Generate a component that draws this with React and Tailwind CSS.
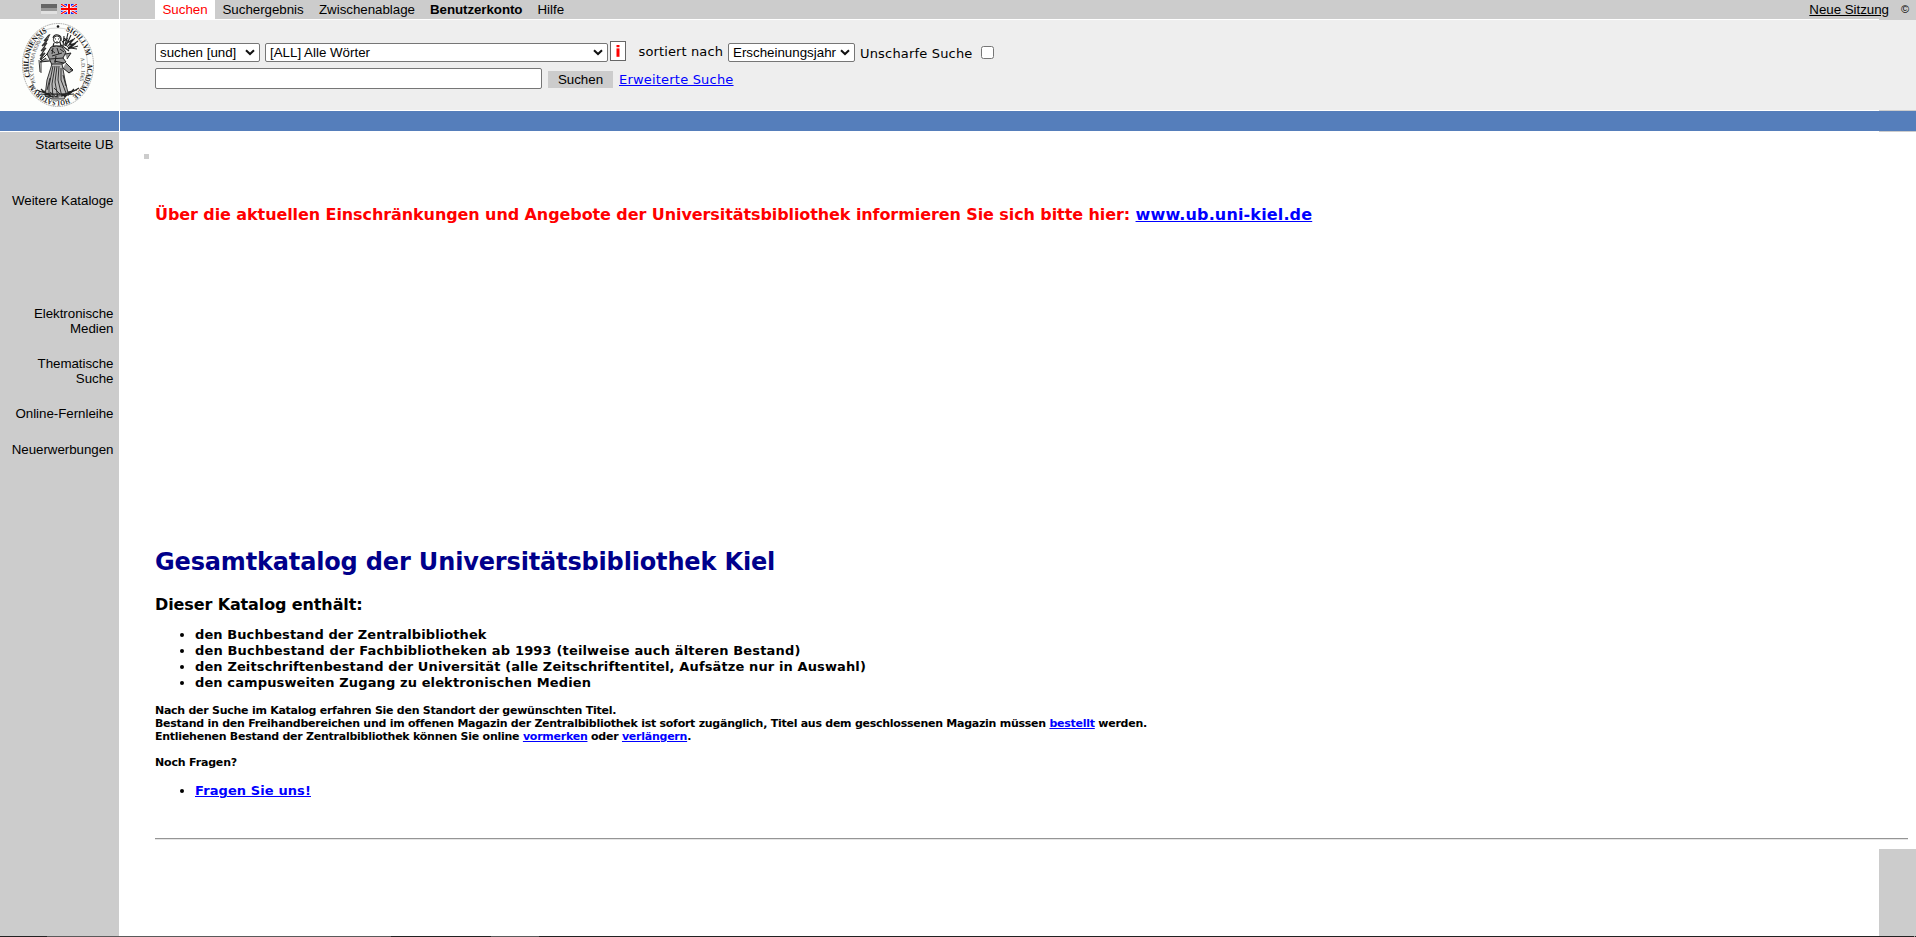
import React from "react";

const link = "text-[#0000ff] underline";

function GermanFlag() {
  return (
    <svg width="16" height="10" viewBox="0 0 16 10" shapeRendering="crispEdges">
      <rect width="16" height="4" fill="#666" />
      <rect y="4" width="16" height="3" fill="#999" />
      <rect y="7" width="16" height="3" fill="#e0e0e0" />
    </svg>
  );
}

function BritishFlag() {
  return (
    <svg width="16" height="10" viewBox="0 0 16 10">
      <rect width="16" height="10" fill="#1a2cf0" />
      <path d="M0 0L16 10M16 0L0 10" stroke="#fff" strokeWidth="2.6" />
      <path d="M0 0L16 10M16 0L0 10" stroke="#f00" strokeWidth="1.2" />
      <path d="M8 0V10M0 5H16" stroke="#fff" strokeWidth="3.6" />
      <path d="M8 0V10M0 5H16" stroke="#f00" strokeWidth="2" />
    </svg>
  );
}

const ringWords = [
  { word: "SIGILLVM", start: 8, length: 34 },
  { word: "ACADEMIAE", start: 50, length: 37 },
  { word: "HOLSATORVM", start: 91, length: 43 },
  { word: "CHILONIENSIS", start: 141, length: 52 },
];

function Seal() {
  return (
    <svg width="119" height="90" viewBox="0 0 119 90" fill="none" stroke="#222" strokeWidth="0.7">
      <ellipse cx="58" cy="45" rx="35.5" ry="41.5" strokeDasharray="1.6 0.7" stroke="#888" />
      <path
        d="M43 10.5Q51 7.5 58 8Q69 8 77 15M32 21Q28 32 28 45Q28 60 37 71M83 25Q88 36 88 48Q87 61 80 69"
        stroke="#bbb"
        strokeWidth="0.6"
      />
      <circle cx="58" cy="6.5" r="1.3" fill="#111" stroke="none" />
      <path id="ring" d="M58 9.5A29.5 35.5 0 0 1 58 80.5A29.5 35.5 0 0 1 58 9.5" stroke="none" />
      {ringWords.map(({ word, start, length }) => (
        <text
          key={word}
          fill="#111"
          stroke="none"
          fontSize="7.6"
          fontWeight="bold"
          fontFamily="Liberation Serif, serif"
        >
          <textPath href="#ring" startOffset={start} textLength={length} lengthAdjust="spacingAndGlyphs">
            {word}
          </textPath>
        </text>
      ))}
      <path id="motto" d="M35.5 63Q28 38 45 16" stroke="none" />
      <text fill="#333" stroke="none" fontSize="5.4" fontFamily="Liberation Serif, serif">
        <textPath href="#motto" textLength="49">PAX OPTIMA RERVM</textPath>
      </text>
      <path id="year" d="M80.5 38Q83 50 79 62" stroke="none" />
      <text fill="#333" stroke="none" fontSize="5.4" fontFamily="Liberation Serif, serif">
        <textPath href="#year" textLength="23">A.D. 1665</textPath>
      </text>
      {/* palm branch */}
      <path d="M41 53Q39.5 33 50 14M39 40L40 52" stroke="#222" strokeWidth="0.9" />
      <path d="M49 15L44 21L48 19L42 26L47 23L41 31L46 28L40 36L45 33L40 39" stroke="#333" strokeWidth="1.2" />
      {/* head and laurel */}
      <circle cx="57" cy="19.5" r="3.6" strokeWidth="1" />
      <path d="M53 18Q54 14 58 15Q62 16 61 21M55 19H56M58 19H59M56 22H58M54 23L53 26H61L60 22" strokeWidth="1.1" />
      {/* sheaf */}
      <path
        d="M63 27L64 16M65 26L68 13M66 26L71 15M67 27L75 18M68 28L78 21M68 29L78 26M62 22L67 19L65 24L72 20L69 25L76 23L70 28L77 29M61 25L69 31M64 18L73 26"
        strokeWidth="1.1"
      />
      {/* torso and arms */}
      <path
        d="M51 27Q56 25 62 27L66 32L63 38L66 42L60 45H52L49 38L47 34ZM48 33L44 37L40 40M46 38L40 42L50 41M65 34L71 33L67 39M66 43L73 50L69 53L63 48M70 49L73 51"
        fill="#999"
        strokeWidth="1"
      />
      <path d="M51 30L55 33M57 28L59 34M52 36L62 33M50 39L63 38M54 41L64 43M60 29L64 32M53 28L52 34M56 36L55 43" strokeWidth="1" />
      {/* robe */}
      <path d="M52 44L47 60L45 76L52 79H64L68 73L65 60L62 44Z" fill="#bbb" strokeWidth="0.9" />
      <path
        d="M53 46L49 66L49 76M55 46L52 64L53 78M57 46L55 62L58 78M59 46L58 60L62 77M61 48L61 60L66 73M50 58L47 70M63 55L66 66M54 68L60 74M50 72L56 77"
        strokeWidth="0.9"
      />
      {/* ground */}
      <path
        d="M37 70Q47 75 57 74Q69 75 79 68M39 72L46 71M41 74L50 75M45 76L57 77M56 76L69 75M62 75L74 74M68 72L77 70M45 73L53 77M72 72L64 77M41 69L45 73M74 69L69 74"
        strokeWidth="1.2"
      />
    </svg>
  );
}

function Select({ children, className }) {
  return (
    <div
      className={
        "flex h-[19px] items-center justify-between rounded-[2px] border border-[#767676] bg-white pl-1 pr-[4px] text-black " +
        className
      }
    >
      <span className="whitespace-nowrap text-[13.333px] leading-[17px]">{children}</span>
      <svg width="10" height="7" viewBox="0 0 10 7" fill="none" className="shrink-0">
        <path d="M1 1.2L5 5L9 1.2" stroke="#111" strokeWidth="2" />
      </svg>
    </div>
  );
}

export default function App() {
  return (
    <div className="flex h-[937px] w-[1916px] flex-col overflow-hidden bg-white font-['Liberation_Sans',Arial,sans-serif] text-[13.333px] leading-[15px] text-black">
      <div className="flex min-h-0 flex-1">
        <aside className="flex w-[119px] shrink-0 flex-col">
          <div className="flex h-[19px] items-start gap-1 bg-[#cccccc] pl-[41px] pt-1">
            <GermanFlag />
            <BritishFlag />
          </div>
          <div className="mt-px h-[90px] bg-[#fdfefc]">
            <Seal />
          </div>
          <div className="mt-px h-5 bg-[#557ebb]" />
          <nav className="mt-px flex flex-1 flex-col items-end bg-[#cccccc] pr-[5.5px] pt-[5px] text-right tracking-[-0.03px]">
            <a>Startseite UB</a>
            <a className="mt-[41px]">Weitere Kataloge</a>
            <a className="mt-[98px]">Elektronische<br />Medien</a>
            <a className="mt-5">Thematische<br />Suche</a>
            <a className="mt-5">Online-Fernleihe</a>
            <a className="mt-[21px]">Neuerwerbungen</a>
          </nav>
        </aside>

        <main className="ml-px flex min-w-0 flex-1 flex-col">
          <header className="flex h-[19px] bg-[#cccccc] pl-[35px] tracking-[-0.03px]">
            <a className="w-[60px] bg-white pl-[7.5px] pt-[2px] text-[#ff0000]">Suchen</a>
            <a className="w-[96px] pl-[7.5px] pt-[2px]">Suchergebnis</a>
            <a className="w-[112px] pl-2 pt-[2px]">Zwischenablage</a>
            <a className="w-[107px] pl-[7px] pt-[2px] font-bold tracking-[-0.07px]">Benutzerkonto</a>
            <a className="pl-[7.5px] pt-[2px]">Hilfe</a>
            <a className="ml-auto pt-[2px] underline">Neue Sitzung</a>
            <span className="ml-3 w-[15px] pt-[2px] text-[11px]">©</span>
          </header>
          <div className="ml-auto h-px w-[37px] bg-[#cccccc]" />

          <form className="h-[90px] bg-[#eeeeee] pl-[35px] pt-[21px] font-['DejaVu_Sans',Verdana,sans-serif] text-[13px]">
            <div className="flex h-[22px] items-start">
              <Select className="mt-[2px] w-[105px] font-['Liberation_Sans',Arial,sans-serif]">suchen [und]</Select>
              <Select className="ml-[5px] mt-[2px] w-[343px] font-['Liberation_Sans',Arial,sans-serif]">[ALL] Alle Wörter</Select>
              <div className="ml-[2px] flex h-5 w-4 items-center justify-center border border-[#666] bg-white">
                <svg width="4" height="12" viewBox="0 0 4 12" fill="#f00">
                  <rect x="0.5" width="3" height="2.2" />
                  <rect x="0.5" y="3.4" width="3" height="8.4" />
                </svg>
              </div>
              <span className="ml-[12.5px] mt-[3px] w-[89.5px] leading-4 tracking-[0.12px]">sortiert nach</span>
              <Select className="mt-[2px] w-[127px] font-['Liberation_Sans',Arial,sans-serif]">Erscheinungsjahr</Select>
              <span className="ml-[5px] mt-[5px] w-[121px] leading-4 tracking-[0.18px]">Unscharfe Suche</span>
              <span className="mt-[5px] size-[13px] rounded-[2.5px] border border-[#767676] bg-white" />
            </div>
            <div className="flex items-start pt-[5px]">
              <div className="h-[21px] w-[387px] rounded-[2px] border border-[#767676] bg-white" />
              <div className="ml-[6px] mt-[3px] h-[17px] w-[65px] bg-[#cccccc] text-center font-['Liberation_Sans',Arial,sans-serif] text-[13.333px] leading-[17px]">
                Suchen
              </div>
              <a className={"ml-[6px] mt-1 leading-4 tracking-[0.2px] " + link}>Erweiterte Suche</a>
            </div>
          </form>
          <div className="ml-auto h-px w-[37px] bg-[#cccccc]" />
          <div className="h-5 bg-[#557ebb]" />
          <div className="ml-auto h-px w-[37px] bg-[#cccccc]" />

          <div className="flex min-h-0 flex-1">
            <section className="w-[1788px] shrink-0 pl-[35px] font-['DejaVu_Sans',Verdana,sans-serif] font-bold">
              <div className="-ml-[11px] mt-[22px] size-[5px] bg-[#cccccc]" />
              <p className="mt-[46px] whitespace-pre text-[16px] leading-5 tracking-[-0.088px] text-[#ff0000]">
                {"Über die aktuellen Einschränkungen und Angebote der Universitätsbibliothek informieren Sie sich bitte hier: "}
                <a className={"tracking-[0.145px] " + link}>www.ub.uni-kiel.de</a>
              </p>
              <h1 className="mt-[322px] text-[24px] leading-[30px] tracking-[-0.155px] text-[#00008b]">
                Gesamtkatalog der Universitätsbibliothek Kiel
              </h1>
              <h2 className="mt-[18px] text-[16px] leading-5 tracking-[-0.118px]">Dieser Katalog enthält:</h2>
              <ul className="mt-[12px] list-disc pl-10 text-[13px] leading-4">
                <li className="tracking-[0.09px]">den Buchbestand der Zentralbibliothek</li>
                <li className="tracking-[0.159px]">den Buchbestand der Fachbibliotheken ab 1993 (teilweise auch älteren Bestand)</li>
                <li className="tracking-[0.121px]">den Zeitschriftenbestand der Universität (alle Zeitschriftentitel, Aufsätze nur in Auswahl)</li>
                <li className="tracking-[0.117px]">den campusweiten Zugang zu elektronischen Medien</li>
              </ul>
              <p className="mt-[13px] text-[11px] leading-[13px] tracking-[-0.26px]">
                Nach der Suche im Katalog erfahren Sie den Standort der gewünschten Titel.
                <br />
                Bestand in den Freihandbereichen und im offenen Magazin der Zentralbibliothek ist sofort zugänglich, Titel aus dem geschlossenen Magazin müssen <a className={link}>bestellt</a> werden.
                <br />
                <span className="tracking-[-0.25px]">
                  Entliehenen Bestand der Zentralbibliothek können Sie online <a className={link}>vormerken</a> oder <a className={link}>verlängern</a>.
                </span>
              </p>
              <p className="mt-[13px] text-[11px] leading-[13px] tracking-[-0.18px]">Noch Fragen?</p>
              <ul className="mt-[14px] list-disc pl-10 text-[13px] leading-4 tracking-[0.1px]">
                <li><a className={link}>Fragen Sie uns!</a></li>
              </ul>
              <div className="mt-[39px] h-[2px] w-[1753px] border-b border-t border-b-[#e6e6e6] border-t-[#959595]" />
            </section>
            <div className="-ml-[29px] mt-[717px] w-[37px] shrink-0 bg-[#cccccc]" />
          </div>
        </main>
      </div>
      <footer className="flex h-px shrink-0 bg-[#222222]">
        <div className="ml-[47px] h-px w-[344px] bg-[#5a5a5a]" />
        <div className="ml-[100px] h-px w-12 bg-[#5a5a5a]" />
        <div className="ml-auto mr-px h-px w-px bg-[#999999]" />
      </footer>
    </div>
  );
}
